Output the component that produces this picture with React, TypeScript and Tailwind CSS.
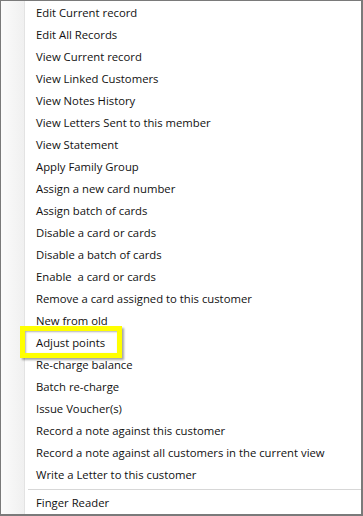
import React from "react";

const items = [
  "Edit Current record",
  "Edit All Records",
  "View Current record",
  "View Linked Customers",
  "View Notes History",
  "View Letters Sent to this member",
  "View Statement",
  "Apply Family Group",
  "Assign a new card number",
  "Assign batch of cards",
  "Disable a card or cards",
  "Disable a batch of cards",
  "Enable  a card or cards",
  "Remove a card assigned to this customer",
  "New from old",
  "Adjust points",
  "Re-charge balance",
  "Batch re-charge",
  "Issue Voucher(s)",
  "Record a note against this customer",
  "Record a note against all customers in the current view",
  "Write a Letter to this customer",
];

export default function App() {
  return (
    <div
      className="relative w-[363px] h-[516px] bg-white border-l border-t border-r-2 border-b-2 border-[#7a7a7a] overflow-hidden flex text-[11.3px] text-[#111]"
      style={{ fontFamily: '"Open Sans", "Noto Sans", sans-serif' }}
    >
      <div className="w-[23px] shrink-0 bg-gradient-to-r from-[#fbfbfb] to-[#f0f0f0]" />
      <div className="w-px shrink-0 bg-[#e3e3e3]" />
      <div className="flex-1 flex flex-col pt-px">
        {items.map((t) => (
          <div key={t} className="h-[22px] flex items-center pl-[11px] whitespace-pre">
            {t}
          </div>
        ))}
        <div className="h-[6px] flex items-center pl-[3px]">
          <div className="h-px w-full bg-[#d7d7d7]" />
        </div>
        <div className="h-[22px] flex items-center pl-[11px]">Finger Reader</div>
      </div>
      <div className="absolute left-[19px] top-[325px] w-[102px] h-[32px] border-[5px] border-[#ffff00] shadow-[2px_2px_2px_rgba(0,0,0,0.35),inset_1px_1px_2px_rgba(0,0,0,0.3)]" />
    </div>
  );
}
